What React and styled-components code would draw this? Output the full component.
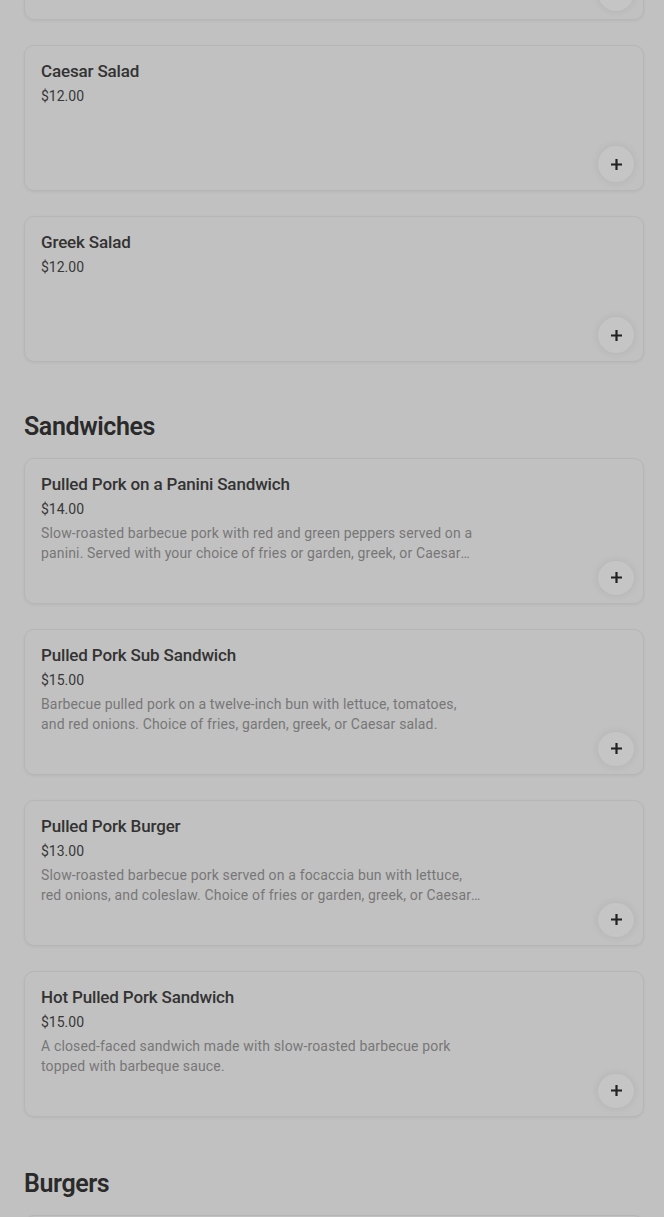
import styled, { createGlobalStyle } from 'styled-components';

const GlobalStyle = createGlobalStyle`
  html, body {
    margin: 0;
    padding: 0;
    background: #c1c1c1;
    font-family: Roboto, "Noto Sans", Arial, sans-serif;
    overflow: hidden;
  }
`;

const Page = styled.div`
  padding: 0 20px 0 24px;
  margin-top: -126px;
`;

const Section = styled.section`
  display: flex;
  flex-direction: column;
  gap: 25px;
  margin-bottom: ${(p) => p.$after || 49}px;
`;

const SectionTitle = styled.h2`
  margin: 0 0 -10px;
  font-size: 25px;
  line-height: 32px;
  font-weight: 600;
  letter-spacing: -0.4px;
  color: #2a2a2a;
`;

const Card = styled.div`
  height: 146px;
  box-sizing: border-box;
  border: 1px solid #b6b6b6;
  border-radius: 10px;
  box-shadow: 0 1px 3px rgba(0, 0, 0, 0.06);
  padding: 14px 16px 0;
  display: flex;
  flex-direction: column;
`;

const Name = styled.div`
  font-size: 17px;
  line-height: 22px;
  font-weight: 500;
  letter-spacing: -0.15px;
  color: #333;
`;

const Price = styled.div`
  margin-top: 4px;
  font-size: 14px;
  line-height: 20px;
  color: #383838;
`;

const Desc = styled.div`
  margin-top: 4px;
  max-width: 440px;
  font-size: 14px;
  line-height: 20px;
  letter-spacing: 0.15px;
  color: #777;
  display: -webkit-box;
  -webkit-line-clamp: 2;
  -webkit-box-orient: vertical;
  overflow: hidden;
`;

const AddButton = styled.button`
  margin-top: auto;
  margin-bottom: 8px;
  margin-right: -7px;
  align-self: flex-end;
  width: 36px;
  height: 36px;
  border-radius: 50%;
  border: none;
  background: #c5c5c5;
  box-shadow: 0 0 8px rgba(0, 0, 0, 0.08);
  display: flex;
  align-items: center;
  justify-content: center;
  padding: 0;
  cursor: pointer;
`;

const Plus = () => (
  <svg width="13" height="13" viewBox="0 0 13 13">
    <path d="M6.5 1v11M1 6.5h11" stroke="#222" strokeWidth="2.2" />
  </svg>
);

const Item = ({ name, price, desc }) => (
  <Card>
    {name && <Name>{name}</Name>}
    {price && <Price>{price}</Price>}
    {desc && <Desc>{desc}</Desc>}
    <AddButton aria-label="Add">
      <Plus />
    </AddButton>
  </Card>
);

const salads = [
  { name: 'Garden Salad', price: '$10.00' },
  { name: 'Caesar Salad', price: '$12.00' },
  { name: 'Greek Salad', price: '$12.00' },
];

const sandwiches = [
  {
    name: 'Pulled Pork on a Panini Sandwich',
    price: '$14.00',
    desc: 'Slow-roasted barbecue pork with red and green peppers served on a panini. Served with your choice of fries or garden, greek, or Caesar salad.',
  },
  {
    name: 'Pulled Pork Sub Sandwich',
    price: '$15.00',
    desc: 'Barbecue pulled pork on a twelve-inch bun with lettuce, tomatoes, and red onions. Choice of fries, garden, greek, or Caesar salad.',
  },
  {
    name: 'Pulled Pork Burger',
    price: '$13.00',
    desc: 'Slow-roasted barbecue pork served on a focaccia bun with lettuce, red onions, and coleslaw. Choice of fries or garden, greek, or Caesar salad.',
  },
  {
    name: 'Hot Pulled Pork Sandwich',
    price: '$15.00',
    desc: 'A closed-faced sandwich made with slow-roasted barbecue pork topped with barbeque sauce.',
  },
];

function App() {
  return (
    <>
      <GlobalStyle />
      <Page>
        <Section>
          {salads.map((s) => (
            <Item key={s.name} {...s} />
          ))}
        </Section>
        <Section $after={51}>
          <SectionTitle>Sandwiches</SectionTitle>
          {sandwiches.map((s) => (
            <Item key={s.name} {...s} />
          ))}
        </Section>
        <Section>
          <SectionTitle>Burgers</SectionTitle>
          <Item name="Classic Burger" price="$13.00" />
        </Section>
      </Page>
    </>
  );
}

export default App;
